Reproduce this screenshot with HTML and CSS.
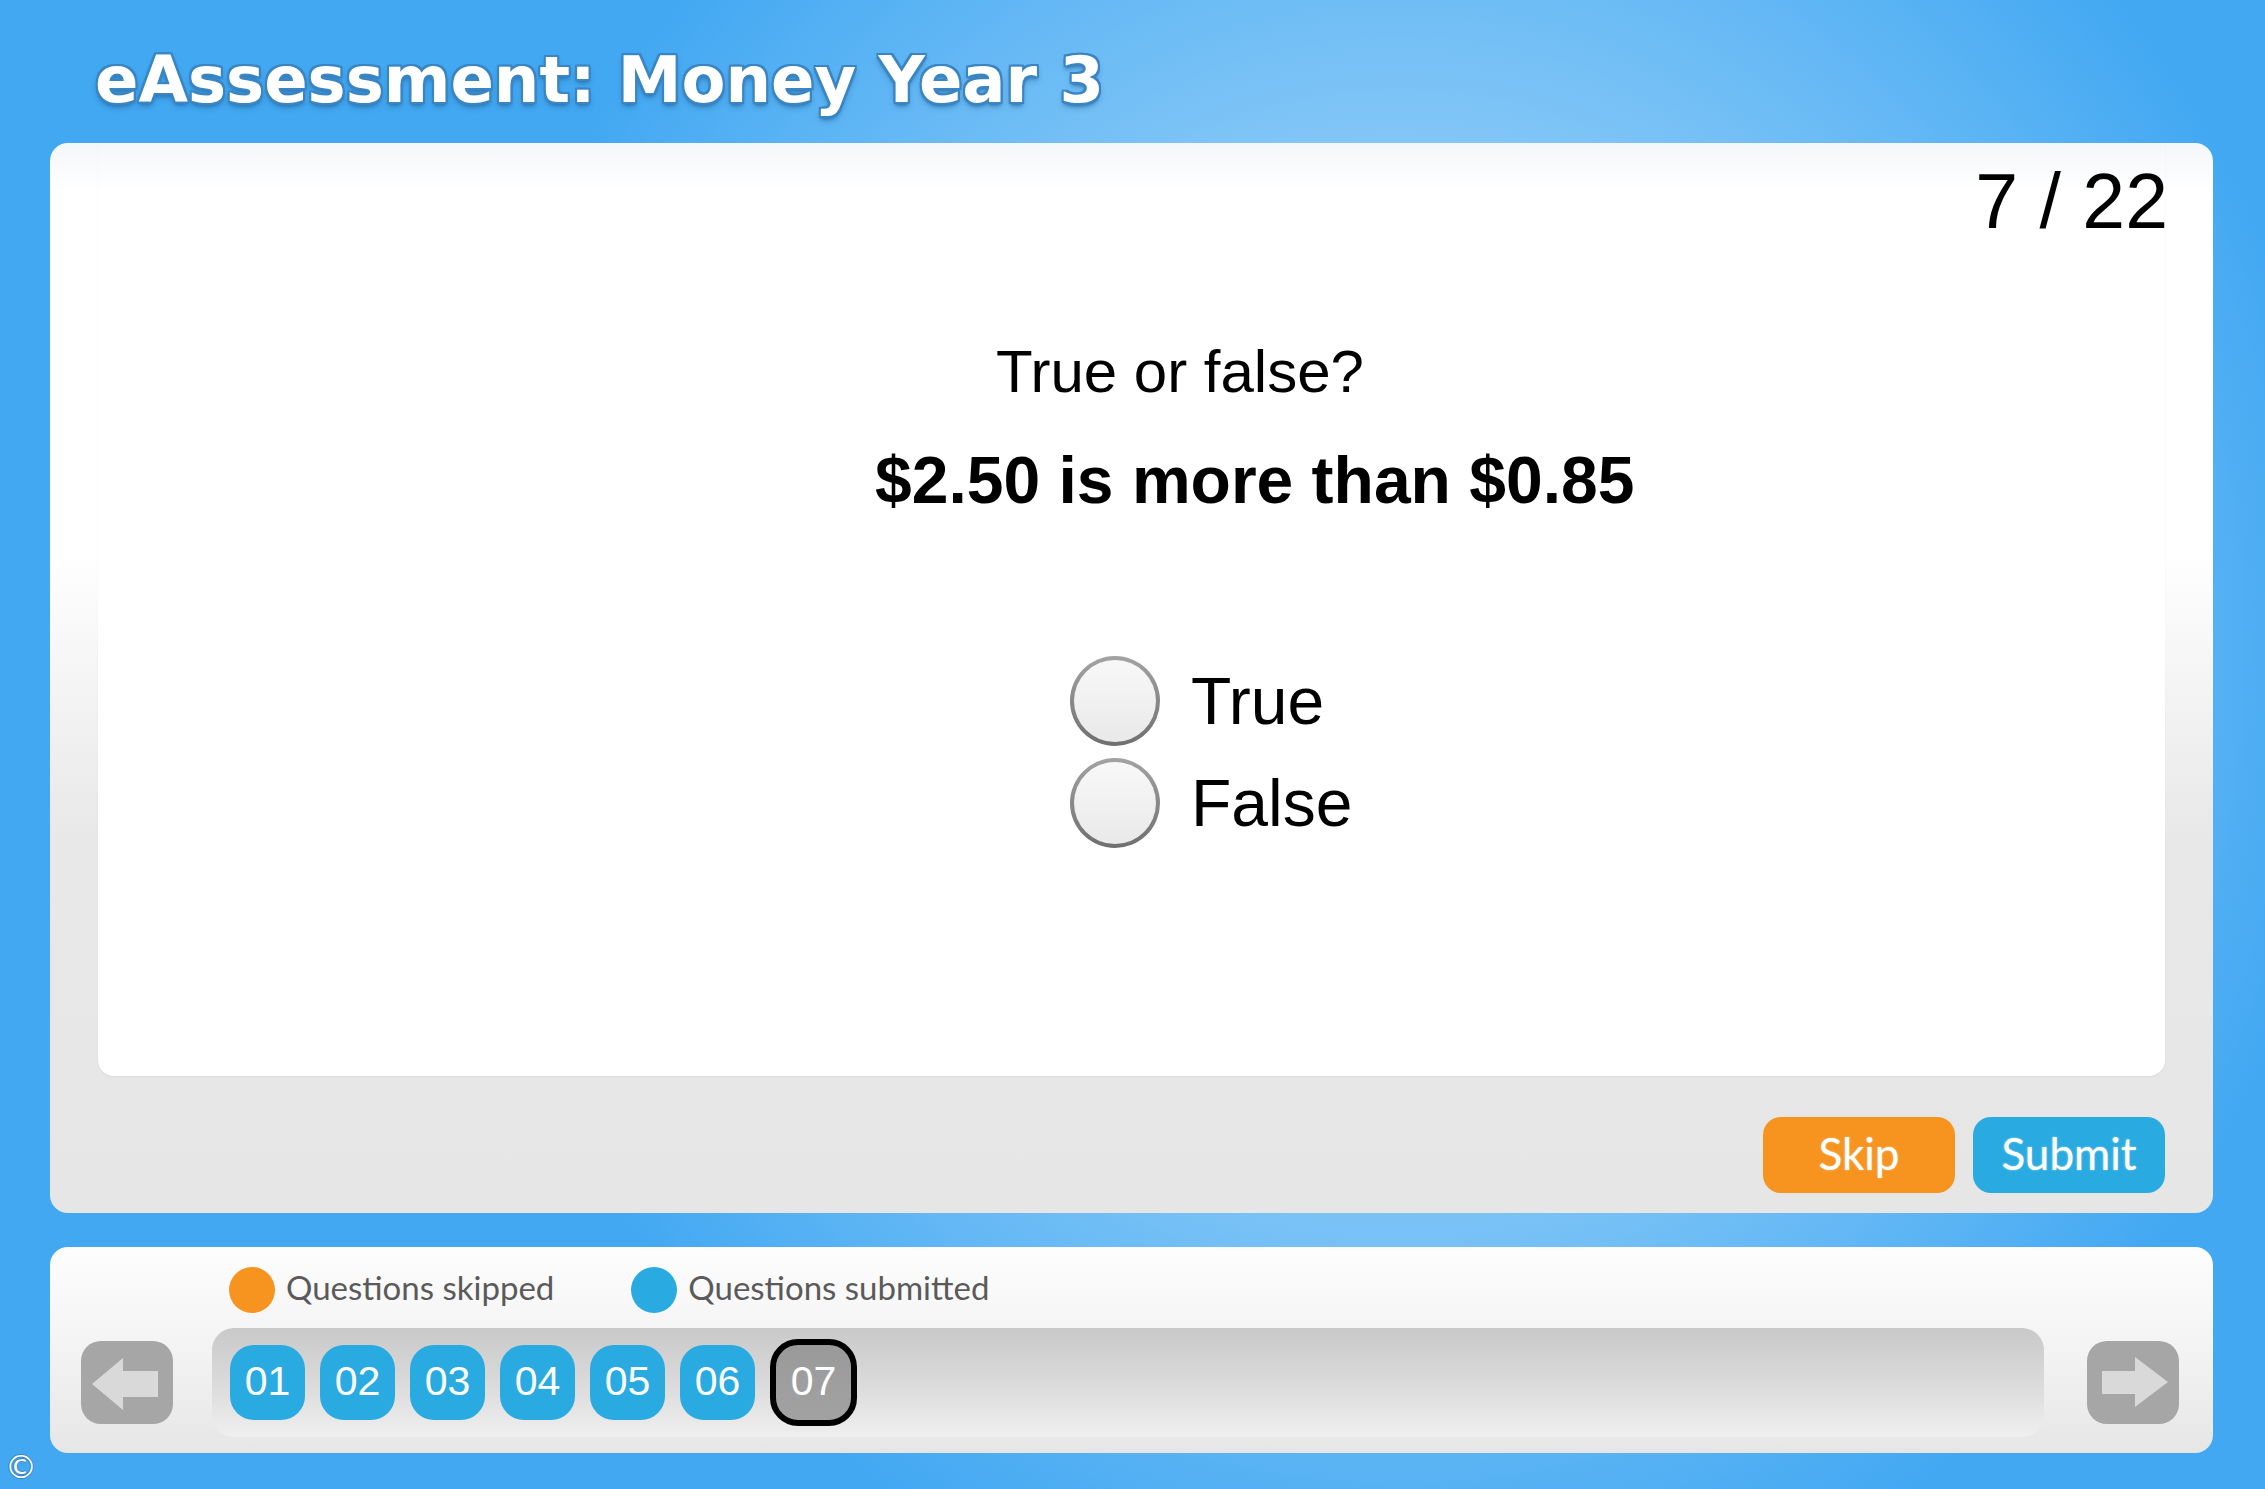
FILE: index.html
```html
<!DOCTYPE html>
<html lang="en">
<head>
<meta charset="utf-8">
<title>eAssessment: Money Year 3</title>
<link rel="stylesheet" href="styles.css">
</head>
<body>
<header class="header">
  <h1 class="title">eAssessment: Money Year 3</h1>
</header>

<section class="panel">
  <div class="stage">
    <div class="counter">7 / 22</div>
    <p class="prompt">True or false?</p>
    <p class="statement">$2.50 is more than $0.85</p>
    <div class="options">
      <label class="option"><span class="radio"></span><span>True</span></label>
      <label class="option"><span class="radio"></span><span>False</span></label>
    </div>
  </div>
  <div class="actions">
    <button class="btn btn-skip">Skip</button>
    <button class="btn btn-submit">Submit</button>
  </div>
</section>

<section class="tracker">
  <div class="legend">
    <div class="legend-item"><span class="dot dot-skip"></span><span>Questions skipped</span></div>
    <div class="legend-item"><span class="dot dot-submit"></span><span>Questions submitted</span></div>
  </div>
  <div class="nav-row">
    <button class="arrow-btn" aria-label="Previous">
      <svg width="92" height="83" viewBox="0 0 92 83"><polygon points="11,43 42,17 42,30 77,30 77,56 42,56 42,69" fill="#d9d9d9"/></svg>
    </button>
    <div class="track">
      <span class="qnum">01</span>
      <span class="qnum">02</span>
      <span class="qnum">03</span>
      <span class="qnum">04</span>
      <span class="qnum">05</span>
      <span class="qnum">06</span>
      <span class="qnum qnum-current">07</span>
    </div>
    <button class="arrow-btn arrow-next" aria-label="Next">
      <svg width="92" height="83" viewBox="0 0 92 83"><polygon points="81,41 48,16 48,30 15,30 15,53 48,53 48,66" fill="#d9d9d9"/></svg>
    </button>
  </div>
</section>

<footer class="copy">©</footer>
</body>
</html>
```

FILE: styles.css
```css
html, body {
  margin: 0;
  padding: 0;
}

body {
  width: 2265px;
  height: 1489px;
  overflow: hidden;
  background-color: #42a8f2;
  background-image: radial-gradient(ellipse 950px 1000px at 1400px 650px, #c4e5fb 0%, #42a8f2 100%);
  font-family: "Liberation Sans", Arial, sans-serif;
}

.header {
  height: 143px;
  box-sizing: border-box;
  padding: 48px 0 0 95px;
}

.title {
  margin: 0;
  font-family: "DejaVu Sans", sans-serif;
  font-weight: bold;
  font-size: 64px;
  line-height: 64px;
  color: #ffffff;
  text-shadow:
    2px 0 0 #3a85c2, -2px 0 0 #3a85c2, 0 2px 0 #3a85c2, 0 -2px 0 #3a85c2,
    2px 2px 0 #3a85c2, -2px 2px 0 #3a85c2, 2px -2px 0 #3a85c2, -2px -2px 0 #3a85c2,
    0 3px 3px #3079b4, 0 4px 6px rgba(20, 70, 120, 0.45);
}

.panel {
  margin-left: 50px;
  width: 2163px;
  height: 1070px;
  box-sizing: border-box;
  border-radius: 18px;
  padding: 0 48px 20px;
  display: flex;
  flex-direction: column;
  background: linear-gradient(to bottom, #f4f7fa 0px, #ffffff 50px, #ffffff 38%, #e8e8e8 65%, #e6e6e6 100%);
}

.stage {
  height: 933px;
  box-sizing: border-box;
  padding-top: 20px;
  background: linear-gradient(to bottom, #f4f7fa 0px, #ffffff 50px, #ffffff 100%);
  border-radius: 0 0 16px 16px;
  box-shadow: 0 1px 2px rgba(0, 0, 0, 0.06);
}

.counter {
  text-align: right;
  font-size: 77px;
  line-height: 77px;
  margin-right: -3px;
  color: #000;
}

.prompt {
  margin: 102px 0 0;
  padding-left: 898px;
  font-size: 60px;
  line-height: 60px;
  color: #000;
}

.statement {
  margin: 45px 0 0;
  padding-left: 777px;
  font-size: 66px;
  line-height: 66px;
  font-weight: bold;
  color: #000;
}

.options {
  margin-top: 143px;
  padding-left: 972px;
  display: flex;
  flex-direction: column;
  gap: 12px;
}

.option {
  display: flex;
  align-items: center;
  gap: 31px;
  height: 90px;
  font-size: 66px;
  line-height: 66px;
  color: #000;
}

.radio {
  width: 90px;
  height: 90px;
  box-sizing: border-box;
  border-radius: 50%;
  border: 4px solid transparent;
  background:
    linear-gradient(to bottom, #f8f8f8, #e9e9e9) padding-box,
    linear-gradient(to bottom, #a3a3a3, #6f6f6f) border-box;
}

.actions {
  margin-top: 41px;
  display: flex;
  justify-content: flex-end;
  gap: 18px;
}

.btn {
  width: 192px;
  height: 76px;
  border: 0;
  border-radius: 18px;
  padding: 0 0 4px;
  box-sizing: border-box;
  display: flex;
  align-items: center;
  justify-content: center;
  font-family: Lato, "Open Sans", sans-serif;
  font-size: 44px;
  color: #ffffff;
  text-shadow: 0 0 2px rgba(255, 255, 255, 0.6);
}

.btn-skip {
  background: #f7931f;
}

.btn-submit {
  background: #29abe2;
}

.tracker {
  margin: 34px 0 0 50px;
  width: 2163px;
  height: 206px;
  box-sizing: border-box;
  border-radius: 18px;
  padding: 20px 34px 16px 31px;
  background: linear-gradient(to bottom, #fdfdfd 0%, #f3f3f3 50%, #e6e6e6 100%);
}

.legend {
  display: flex;
  align-items: center;
  height: 46px;
  padding-left: 148px;
  font-family: Lato, "Open Sans", sans-serif;
  font-size: 33px;
  color: #5a5a5a;
}

.legend-item {
  display: flex;
  align-items: center;
  gap: 11px;
}

.legend-item span:last-child {
  position: relative;
  top: -3px;
}

.legend-item + .legend-item {
  margin-left: 77px;
}

.dot {
  width: 46px;
  height: 46px;
  border-radius: 50%;
}

.dot-skip {
  background: #f7931f;
}

.dot-submit {
  background: #29abe2;
}

.nav-row {
  margin-top: 15px;
  height: 109px;
  display: flex;
  align-items: center;
}

.arrow-btn {
  width: 92px;
  height: 83px;
  padding: 0;
  border: 0;
  border-radius: 20px;
  background: #a6a6a6;
  display: block;
}

.arrow-btn svg {
  display: block;
}

.track {
  margin: 0 43px 0 39px;
  flex: 1;
  height: 109px;
  box-sizing: border-box;
  padding-left: 18px;
  border-radius: 22px;
  display: flex;
  align-items: center;
  gap: 15px;
  background: linear-gradient(to bottom, #c9c9c9 0%, #d8d8d8 45%, #e9e9e9 85%, #efefef 100%);
}

.qnum {
  width: 75px;
  height: 75px;
  box-sizing: border-box;
  padding-bottom: 3px;
  border-radius: 24px;
  background: #29abe2;
  color: #ffffff;
  font-size: 41px;
  display: flex;
  align-items: center;
  justify-content: center;
}

.qnum-current {
  width: 87px;
  height: 87px;
  border: 6px solid #000;
  border-radius: 28px;
  background: linear-gradient(to bottom, #9a9a9a, #a2a2a2);
}

.copy {
  margin-top: -4px;
  padding-left: 5px;
  font-family: "DejaVu Sans", sans-serif;
  font-size: 32px;
  line-height: 36px;
  color: #ffffff;
  text-shadow: 1px 0 0 #3a85c2, -1px 0 0 #3a85c2, 0 1px 0 #3a85c2, 0 -1px 0 #3a85c2;
}
```
